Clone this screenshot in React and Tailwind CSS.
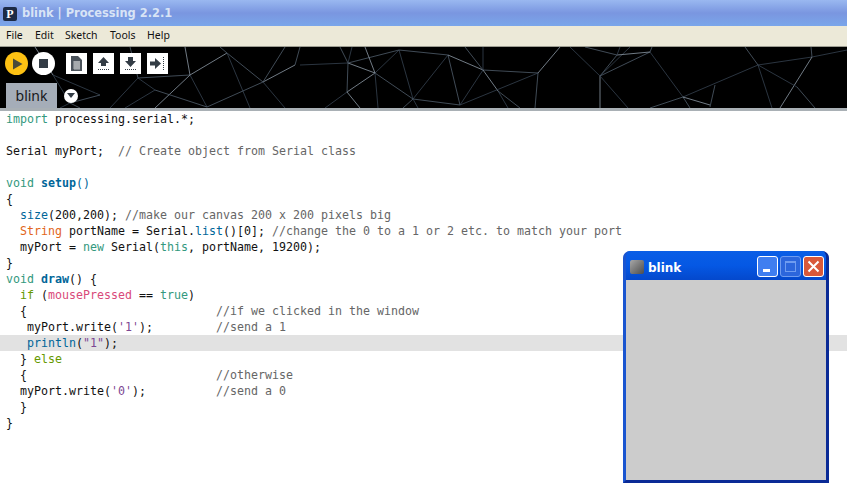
import React from 'react';

const K = 'text-[#33997e]';
const F = 'text-[#006699]';
const C = 'text-[#666666]';
const S = 'text-[#7d4793]';
const O = 'text-[#e2661a]';
const G = 'text-[#669900]';
const P = 'text-[#d94a7a]';
const B = 'text-[#006699] font-bold';

const CODE = [
  [['import', K], [' processing.serial.*;']],
  [],
  [['Serial myPort;  '], ['// Create object from Serial class', C]],
  [],
  [['void', K], [' '], ['setup', B], ['()', F]],
  [['{']],
  [['  '], ['size', F], ['(200,200); '], ['//make our canvas 200 x 200 pixels big', C]],
  [['  '], ['String', O], [' portName = Serial.'], ['list', F], ['()[0]; '], ['//change the 0 to a 1 or 2 etc. to match your port', C]],
  [['  myPort = '], ['new', K], [' Serial('], ['this', K], [', portName, 19200);']],
  [['}']],
  [['void', K], [' '], ['draw', B], ['() {']],
  [['  '], ['if', G], [' ('], ['mousePressed', P], [' == '], ['true', K], [')']],
  [['  {                           '], ['//if we clicked in the window', C]],
  [['   myPort.write('], ["'1'", S], [');         '], ['//send a 1', C]],
  [['   '], ['println', F], ['('], ['"1"', S], [');']],
  [['  } '], ['else', G]],
  [['  {                           '], ['//otherwise', C]],
  [['  myPort.write('], ["'0'", S], [');          '], ['//send a 0', C]],
  [['  }']],
  [['}']],
];

const NET = [
  [348, 63, 375, 73], [375, 73, 399, 50], [348, 63, 399, 50], [399, 50, 413, 99], [375, 73, 413, 99],
  [375, 73, 347, 92], [347, 92, 348, 63], [300, 65, 348, 63], [340, 47, 348, 63], [352, 47, 348, 63],
  [365, 47, 375, 73], [375, 73, 378, 108], [399, 50, 448, 55], [448, 55, 413, 99], [448, 55, 460, 105],
  [448, 55, 483, 70], [465, 47, 483, 70], [483, 47, 483, 70], [483, 70, 538, 73], [483, 70, 460, 105],
  [483, 70, 498, 91], [498, 91, 508, 108], [498, 91, 520, 108], [460, 105, 538, 73], [538, 73, 535, 108],
  [538, 73, 560, 47], [413, 99, 460, 105], [413, 99, 418, 108], [413, 99, 403, 108], [347, 92, 325, 108],
  [347, 92, 360, 108], [570, 47, 600, 76], [600, 76, 617, 55], [600, 76, 630, 47], [600, 76, 650, 52],
  [617, 55, 650, 52], [585, 47, 617, 55], [617, 55, 620, 47], [650, 52, 652, 47], [650, 52, 683, 97],
  [600, 76, 600, 108], [600, 76, 628, 108], [683, 97, 650, 108], [683, 97, 758, 65], [683, 97, 690, 108],
  [683, 97, 710, 105], [715, 85, 710, 107], [758, 65, 812, 57], [812, 57, 811, 47], [812, 57, 847, 50],
  [812, 57, 780, 108], [758, 65, 797, 87], [797, 87, 815, 108], [758, 65, 772, 108], [745, 47, 758, 65],
  [227, 53, 190, 75], [227, 53, 263, 82], [227, 53, 250, 108], [190, 75, 138, 78], [190, 75, 207, 107],
  [190, 75, 155, 108], [138, 78, 155, 90], [155, 90, 207, 107], [155, 90, 125, 108], [138, 78, 130, 47],
  [263, 82, 295, 65], [263, 82, 207, 107], [263, 82, 285, 108], [295, 65, 300, 47],
  [53, 75, 70, 103], [53, 75, 35, 47], [53, 75, 100, 95], [70, 103, 100, 95], [70, 103, 60, 108],
  [70, 103, 80, 108], [185, 47, 190, 75], [220, 47, 227, 53], [110, 108, 138, 78], [285, 47, 263, 82],
];

const MENUS = ['File', 'Edit', 'Sketch', 'Tools', 'Help'];

function ToolButton({ children }) {
  return (
    <div className="w-[21px] h-[21px] bg-white flex items-center justify-center">
      <svg width="17" height="17" viewBox="0 0 17 17">{children}</svg>
    </div>
  );
}

const Dots = ({ y }) => (
  <line x1="3" x2="14" y1={y} y2={y} stroke="#333c45" strokeWidth="1" strokeDasharray="1 1" />
);

function Toolbar() {
  return (
    <div className="relative h-[61px] bg-black overflow-hidden">
      <svg className="absolute inset-0" width="847" height="61" viewBox="0 47 847 61">
        {NET.map((l, i) => (
          <line
            key={i}
            x1={l[0]}
            y1={l[1]}
            x2={l[2]}
            y2={l[3]}
            stroke={i % 5 === 0 ? '#8d99a6' : i % 2 ? '#364250' : '#515e6c'}
            strokeWidth="0.8"
          />
        ))}
      </svg>
      <div className="relative flex items-center pl-[5px] pt-[5px]">
        <div className="w-[23px] h-[23px] rounded-full bg-[#fdc113] flex items-center justify-center">
          <svg width="12" height="12" viewBox="0 0 12 12">
            <path d="M2 0.5 L11.5 6 L2 11.5 Z" fill="#4a4a3a" />
          </svg>
        </div>
        <div className="ml-[4px] w-[23px] h-[23px] rounded-full bg-white flex items-center justify-center">
          <div className="w-[9px] h-[9px] bg-[#333c45]" />
        </div>
        <div className="ml-[11px] flex gap-[6px]">
          <ToolButton>
            <path d="M3 1 H10 L14 5 V16 H3 Z" fill="#4b535b" />
            <path d="M5 7 H12 M5 9 H12 M5 11 H12 M5 13 H12 M7 6 V15 M9 6 V15 M11 6 V15" stroke="#ffffff" strokeWidth="0.6" />
          </ToolButton>
          <ToolButton>
            <path d="M8.5 2 L14 8 H11 V11 H6 V8 H3 Z" fill="#333c45" />
            <Dots y={14.5} />
          </ToolButton>
          <ToolButton>
            <path d="M6 2 H11 V6 H14 L8.5 12 L3 6 H6 Z" fill="#333c45" />
            <Dots y={14.5} />
          </ToolButton>
          <ToolButton>
            <path d="M1 6.5 H6 V3 L12 8.5 L6 14 V10.5 H1 Z" fill="#333c45" />
            <line x1="14.5" x2="14.5" y1="2" y2="15" stroke="#333c45" strokeDasharray="1 1" />
          </ToolButton>
        </div>
      </div>
      <div className="absolute left-[6px] bottom-0 flex items-center">
        <div className="w-[51px] h-[25px] bg-[#a5adb8] text-[#17181a] text-[14px] font-['Noto_Sans',sans-serif] flex items-center justify-center">
          blink
        </div>
        <div className="ml-[7px] w-[14px] h-[14px] rounded-full bg-white flex items-center justify-center">
          <svg width="8" height="5" viewBox="0 0 8 5">
            <path d="M0 0 H8 L4 5 Z" fill="#333c45" />
          </svg>
        </div>
      </div>
    </div>
  );
}

function BlinkWindow() {
  return (
    <div className="absolute left-[623px] top-[251px] w-[206px] h-[232px] flex flex-col rounded-t-[7px] bg-[#0a50d8] border-l-[3px] border-r-[3px] border-b-[3px] border-l-[#1a55d0] border-r-[#0a2a96] border-b-[#0a2a96] overflow-hidden">
      <div className="h-[29px] pt-[2px] flex items-center bg-gradient-to-b from-[#0a5ee6] via-[#0558e4] to-[#0448cc]">
        <div className="ml-[4px] w-[14px] h-[14px] rounded-[2px] bg-gradient-to-br from-[#a8a8a8] to-[#4d4d4d]" />
        <span className="ml-[4px] mt-[3px] text-white text-[12px] font-bold font-['DejaVu_Sans',sans-serif]">blink</span>
        <div className="ml-auto mr-[2px] flex gap-[2px]">
          <div className="w-[21px] h-[21px] rounded-[3px] border border-white bg-[#3f7ef0] flex items-end pl-[5px] pb-[4px]">
            <div className="w-[7px] h-[3px] bg-white" />
          </div>
          <div className="w-[21px] h-[21px] rounded-[3px] border border-[#6f9cf0] bg-[#2c66dc] flex items-center justify-center">
            <div className="w-[11px] h-[11px] border border-[#6f9cf0] border-t-2" />
          </div>
          <div className="w-[21px] h-[21px] rounded-[3px] border border-white bg-[#d9583a] flex items-center justify-center">
            <svg width="13" height="13" viewBox="0 0 13 13">
              <path d="M1.5 1.5 L11.5 11.5 M11.5 1.5 L1.5 11.5" stroke="#ffffff" strokeWidth="2" />
            </svg>
          </div>
        </div>
      </div>
      <div className="flex-1 bg-[#cccccc]" />
    </div>
  );
}

export default function App() {
  return (
    <div className="relative w-[847px] h-[487px] bg-white overflow-hidden">
      <div className="h-[26px] pt-[1px] flex items-center bg-gradient-to-b from-[#9ab8f0] via-[#7a96e0] to-[#7aa6ea]">
        <div className="ml-[3px] w-[14px] h-[14px] rounded-[2px] bg-[#1c2a44] text-white text-[12px] leading-[14px] font-bold font-['Liberation_Serif',serif] text-center">
          P
        </div>
        <span className="ml-[5px] text-[#d8e4f6] text-[11.4px] font-bold font-['DejaVu_Sans',sans-serif] whitespace-pre">
          blink | Processing 2.2.1
        </span>
      </div>
      <div className="h-[21px] flex items-center bg-[#ece9d8] border-b border-[#9d9d92] pl-[6px] text-[10.5px] text-[#111111] font-['Noto_Sans',sans-serif]">
        <span className="w-[29px]">{MENUS[0]}</span>
        <span className="w-[30px]">{MENUS[1]}</span>
        <span className="w-[45px]">{MENUS[2]}</span>
        <span className="w-[37px]">{MENUS[3]}</span>
        <span>{MENUS[4]}</span>
      </div>
      <Toolbar />
      <div className="h-[3px] bg-[#a9b0b5]" />
      <div className="pl-[6px] text-[11.63px] leading-[16px] text-[#111111] font-['DejaVu_Sans_Mono',monospace] whitespace-pre">
        {CODE.map((line, i) => (
          <div key={i} className={`h-[16px] -ml-[6px] pl-[6px] ${i === 14 ? 'bg-[#e2e2e2]' : ''}`}>
            {line.map((t, j) => (
              <span key={j} className={t[1]}>{t[0]}</span>
            ))}
          </div>
        ))}
      </div>
      <BlinkWindow />
    </div>
  );
}
